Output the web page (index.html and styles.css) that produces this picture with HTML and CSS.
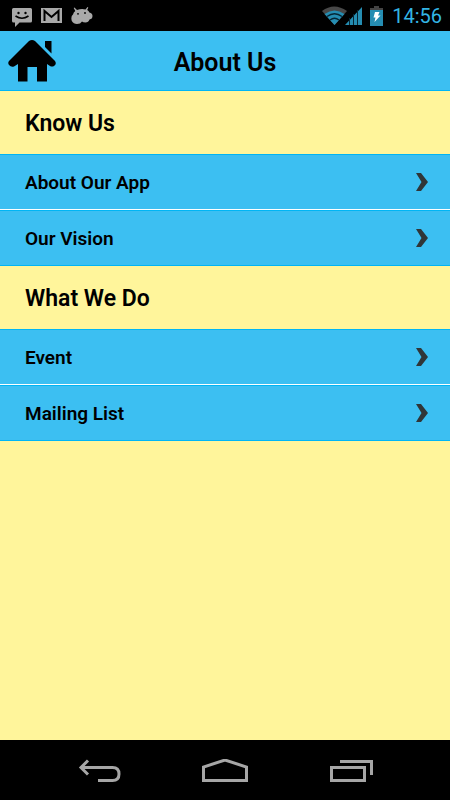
FILE: index.html
```html
<!DOCTYPE html>
<html lang="en">
<head>
<meta charset="utf-8">
<meta name="viewport" content="width=device-width, initial-scale=1">
<title>About Us</title>
<link rel="stylesheet" href="styles.css">
</head>
<body>
<div class="status">
  <div class="notices">
    <svg width="20" height="20" viewBox="0 0 20 20" aria-hidden="true"><path fill="#a9a9a9" d="M1.500 1h17q1.500 0 1.500 1.500v11.500q0 1.500-1.500 1.500H7.500L3 20v-4.500H1.500Q0 15.500 0 14V2.500Q0 1 1.500 1z"/><circle cx="6.500" cy="6" r="1.200"/><circle cx="13.500" cy="6" r="1.200"/><path d="M3.500 9q6.500 4.500 13 0" fill="none" stroke="#000" stroke-width="1.600"/></svg>
    <svg width="21" height="20" viewBox="0 0 21 20" aria-hidden="true"><path fill="#a9a9a9" d="M0 1h21v15H0z"/><path d="M3.500 14V4l7 6 7-6v10" fill="none" stroke="#000" stroke-width="2"/></svg>
    <svg width="22" height="20" viewBox="0 0 22 20" aria-hidden="true"><path fill="#a9a9a9" d="M3.500.5L6 3q4.500-1.500 8.500-.5L16.500 0l.8.6L16.200 3q1.500.8 2.200 2.500Q21.500 6 21.500 9t-3 3.500q-1 3-4 3-2.500 0-3.500-1Q9.500 17 6 17T.8 14Q-.5 9.500 2 7.500 2.500 5 4.300 4L2.700 1z"/><circle cx="7" cy="6.800" r=".9"/><circle cx="14" cy="6" r=".9"/></svg>
  </div>
  <div class="system">
    <svg width="40" height="20" viewBox="0 0 40 20" aria-hidden="true"><path fill="#484848" d="M0 5q12-9 25 0L12.500 19z"/><path fill="#258db2" d="M2.500 8q10-7 20 0l-10 11z"/><path d="M5 10.500q7.500-5.500 15 0M8 14q4.500-3.500 9 0" fill="none" stroke="#062735" stroke-width="1.500"/><path fill="#258db2" d="M23 19L41 0v19z"/><path d="M27.500 12v7M31.500 8v11M35.500 4v15" stroke="#062735"/></svg>
    <svg class="battery" width="13" height="20" viewBox="0 0 13 20" aria-hidden="true"><path fill="#444" d="M4 0h5v2h4v3H0V2h4z"/><path fill="#258db2" d="M0 4h13v16H0z"/><path fill="#fff" d="M5 6h4.500L8 9.500h2.500L4.500 16l1-4.500H3.500z"/></svg>
    <time>14:56</time>
  </div>
</div>
<header class="header">
  <a class="home" href="#" aria-label="Home"><svg width="48" height="42" viewBox="0 0 48 42" aria-hidden="true"><path d="M21 1q3-2 6 0l20 20q2 3-1 5-2 1-4 0l-3-2v17.500H29V27h-9.500v14.500H10V24l-4 2.500q-3 1-5-1.500-1.500-2 0-4zM37 1h6.500v12.500L37 7z"/></svg></a>
  <h1>About Us</h1>
</header>
<main class="content">
  <h2>Know Us</h2>
  <ul>
    <li><a href="#">About Our App<svg width="12" height="18" viewBox="0 0 12 18" aria-hidden="true"><path d="M0 0h5l7 9-7 9H0l5.500-9z"/></svg></a></li>
    <li><a href="#">Our Vision<svg width="12" height="18" viewBox="0 0 12 18" aria-hidden="true"><path d="M0 0h5l7 9-7 9H0l5.500-9z"/></svg></a></li>
  </ul>
  <h2>What We Do</h2>
  <ul>
    <li><a href="#">Event<svg width="12" height="18" viewBox="0 0 12 18" aria-hidden="true"><path d="M0 0h5l7 9-7 9H0l5.500-9z"/></svg></a></li>
    <li><a href="#">Mailing List<svg width="12" height="18" viewBox="0 0 12 18" aria-hidden="true"><path d="M0 0h5l7 9-7 9H0l5.500-9z"/></svg></a></li>
  </ul>
</main>
<nav class="navbar" aria-label="System">
  <button type="button" aria-label="Back"><svg width="46" height="26" viewBox="0 0 46 26"><path d="M12 1.500L5 8.500l7 7M5 8.500h31.500q6.500 0 6.500 6.500t-6.500 6.500H22"/></svg></button>
  <button type="button" aria-label="Home screen"><svg width="46" height="26" viewBox="0 0 46 26"><path d="M1.500 21.500V8L23 1l21.500 7v13.500z"/></svg></button>
  <button type="button" aria-label="Recent apps"><svg width="46" height="26" viewBox="0 0 46 26"><path d="M3.500 8.500h33v13h-33zM12 2.500h31.500V16"/></svg></button>
</nav>
</body>
</html>
```

FILE: styles.css
```css
* { box-sizing: border-box; }
body {
  margin: 0;
  min-height: 100vh;
  display: flex;
  flex-direction: column;
  background: #fff59b;
  color: #000;
  font-family: Roboto, "Liberation Sans", sans-serif;
}
svg { display: block; }
h1, h2, ul { margin: 0; padding: 0; }
.status {
  display: flex;
  justify-content: space-between;
  align-items: center;
  height: 31px;
  padding: 0 8px 0 12px;
  background: #000;
}
.notices, .system { display: flex; align-items: center; }
.notices { gap: 9px; padding-top: 2px; }
.battery { margin: 0 9px 0 8px; }
.system time { color: #33b5e5; font-size: 20px; }
.header {
  display: grid;
  grid-template-columns: 1fr auto 1fr;
  align-items: center;
  height: 60px;
  padding: 0 8px;
  background: #3cbff2;
  border-bottom: 1px solid #00b5f5;
}
h1 { grid-column: 2; padding-top: 4px; font-size: 25px; font-weight: 600; line-height: 30px; }
.content { flex: 1; }
h2 { padding: 18px 25px 15px; font-size: 23px; font-weight: 600; line-height: 30px; }
ul { list-style: none; }
li a {
  display: flex;
  align-items: center;
  justify-content: space-between;
  min-height: 56px;
  padding: 0 22px 0 25px;
  background: #3cbff2;
  border: solid #00b5f5;
  border-width: 1px 0;
  color: #000;
  font-size: 19px;
  font-weight: 600;
  text-decoration: none;
}
li:not(:last-child) a { border-bottom-color: #fff; }
li a svg { fill: #303638; }
.navbar {
  display: flex;
  justify-content: center;
  gap: 80px;
  height: 60px;
  background: #000;
}
.navbar button { padding: 4px 0 0; border: 0; background: none; }
.navbar path { fill: none; stroke: #a6a6a6; stroke-width: 3; }
```
